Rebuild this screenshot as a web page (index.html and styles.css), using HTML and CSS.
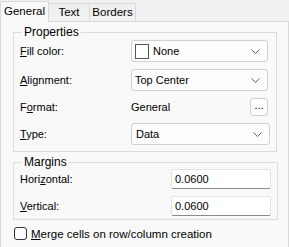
FILE: index.html
```html
<!DOCTYPE html>
<html lang="en">
<head>
  <meta charset="UTF-8">
  <title>Cell Properties</title>
  <link rel="stylesheet" href="styles.css">
</head>
<body>

  <!-- Tab strip -->
  <div class="tabs">
    <div class="tab active">General</div>
    <div class="tab tab-text">Text</div>
    <div class="tab tab-borders">Borders</div>
  </div>

  <!-- Tab page -->
  <div class="page">

    <fieldset class="group props">
      <legend>Properties</legend>
      <div class="grid">
        <label><u>F</u>ill color:</label>
        <div class="combo">
          <span class="swatch"></span>None
          <svg class="chev" width="9" height="5" viewBox="0 0 9 5"><path d="M0.5 0.5 L4.5 4.5 L8.5 0.5" fill="none" stroke="#606060"/></svg>
        </div>

        <label><u>A</u>lignment:</label>
        <div class="combo">
          Top Center
          <svg class="chev" width="9" height="5" viewBox="0 0 9 5"><path d="M0.5 0.5 L4.5 4.5 L8.5 0.5" fill="none" stroke="#606060"/></svg>
        </div>

        <label>F<u>o</u>rmat:</label>
        <div class="format">
          <span>General</span>
          <button class="dots">...</button>
        </div>

        <label><u>T</u>ype:</label>
        <div class="combo wide">
          Data
          <svg class="chev" width="9" height="5" viewBox="0 0 9 5"><path d="M0.5 0.5 L4.5 4.5 L8.5 0.5" fill="none" stroke="#606060"/></svg>
        </div>
      </div>
    </fieldset>

    <fieldset class="group margins">
      <legend>Margins</legend>
      <div class="grid grid-m">
        <label>Hori<u>z</u>ontal:</label>
        <input class="num" type="text" value="0.0600">
        <label><u>V</u>ertical:</label>
        <input class="num" type="text" value="0.0600">
      </div>
    </fieldset>

    <div class="check-row">
      <span class="check"></span>
      <span><u>M</u>erge cells on row/column creation</span>
    </div>

  </div>

</body>
</html>
```

FILE: styles.css
```css
body {
  margin: 0;
  background: #f0f0f0;
  font-family: "Liberation Sans", Arial, sans-serif;
  font-size: 11px;
  color: #000;
}

u {
  text-decoration: underline;
  text-underline-offset: 1px;
}

/* Tab strip */
.tabs {
  display: flex;
  align-items: flex-end;
  height: 21px;
}

.tab {
  box-sizing: border-box;
  height: 18px;
  line-height: 16px;
  text-align: center;
  border: 1px solid #d9d9d9;
  border-bottom: none;
  margin-left: -1px;
  background: #f0f0f0;
  font-size: 11.5px;
}

.tab.active {
  width: 49px;
  height: 21px;
  margin-left: 0;
  margin-bottom: -1px;
  line-height: 19px;
  background: #f9f9f9;
  position: relative;
  z-index: 1;
}

.tab-text {
  width: 42px;
}

.tab-borders {
  width: 47px;
}

/* Tab page (bottom edge is below the visible area) */
.page {
  box-sizing: border-box;
  height: 226px;
  border: 1px solid #d9d9d9;
  border-bottom: none;
  background: #f9f9f9;
  padding: 4px 11px 0 12px;
}

.group {
  margin: 0;
  border: 1px solid #dcdcdc;
  padding: 1px 6px 6px 6px;
}

.group legend {
  margin-left: 2px;
  padding: 0 2px;
  line-height: 13px;
  font-size: 12px;
}

.margins {
  margin-top: 4px;
  padding-top: 0;
  padding-bottom: 3px;
}

.grid {
  display: grid;
  grid-template-columns: 111px auto;
  grid-template-rows: 22px 22px 18px 22px;
  row-gap: 7px;
  align-items: center;
}

.grid-m {
  grid-template-columns: 151px 100px;
  grid-template-rows: 20px 20px;
}

/* Combo box */
.combo {
  box-sizing: border-box;
  position: relative;
  width: 137px;
  height: 22px;
  border: 1px solid #d0d0d0;
  border-radius: 3px;
  background: #fdfdfd;
  display: flex;
  align-items: center;
  padding-left: 3px;
}

.combo.wide {
  width: 139px;
  padding-left: 4px;
}

.chev {
  position: absolute;
  right: 7px;
  top: 8px;
}

.swatch {
  box-sizing: border-box;
  width: 14px;
  height: 15px;
  border: 1px solid #555;
  background: #fff;
  margin-right: 4px;
}

.format {
  display: flex;
  align-items: center;
  justify-content: space-between;
  width: 137px;
}

.dots {
  box-sizing: border-box;
  width: 18px;
  height: 18px;
  padding: 0 0 4px;
  border: 1px solid #cfcfcf;
  border-radius: 3px;
  background: #fdfdfd;
  font-family: inherit;
  font-size: 11px;
  color: #000;
}

/* Numeric text box */
.num {
  box-sizing: border-box;
  width: 100px;
  height: 20px;
  margin: 0;
  padding: 0 3px;
  border: 1px solid #e3e3e3;
  border-bottom-color: #8a8a8a;
  border-radius: 2px;
  background: #fff;
  font-family: inherit;
  font-size: 11px;
  color: #000;
}

/* Check box row */
.check-row {
  display: flex;
  align-items: center;
  gap: 4px;
  margin-top: 7px;
  margin-left: 1px;
  font-size: 11.5px;
}

.check {
  box-sizing: border-box;
  width: 13px;
  height: 13px;
  border: 1px solid #333;
  border-radius: 3px;
  background: #fdfdfd;
}
```
